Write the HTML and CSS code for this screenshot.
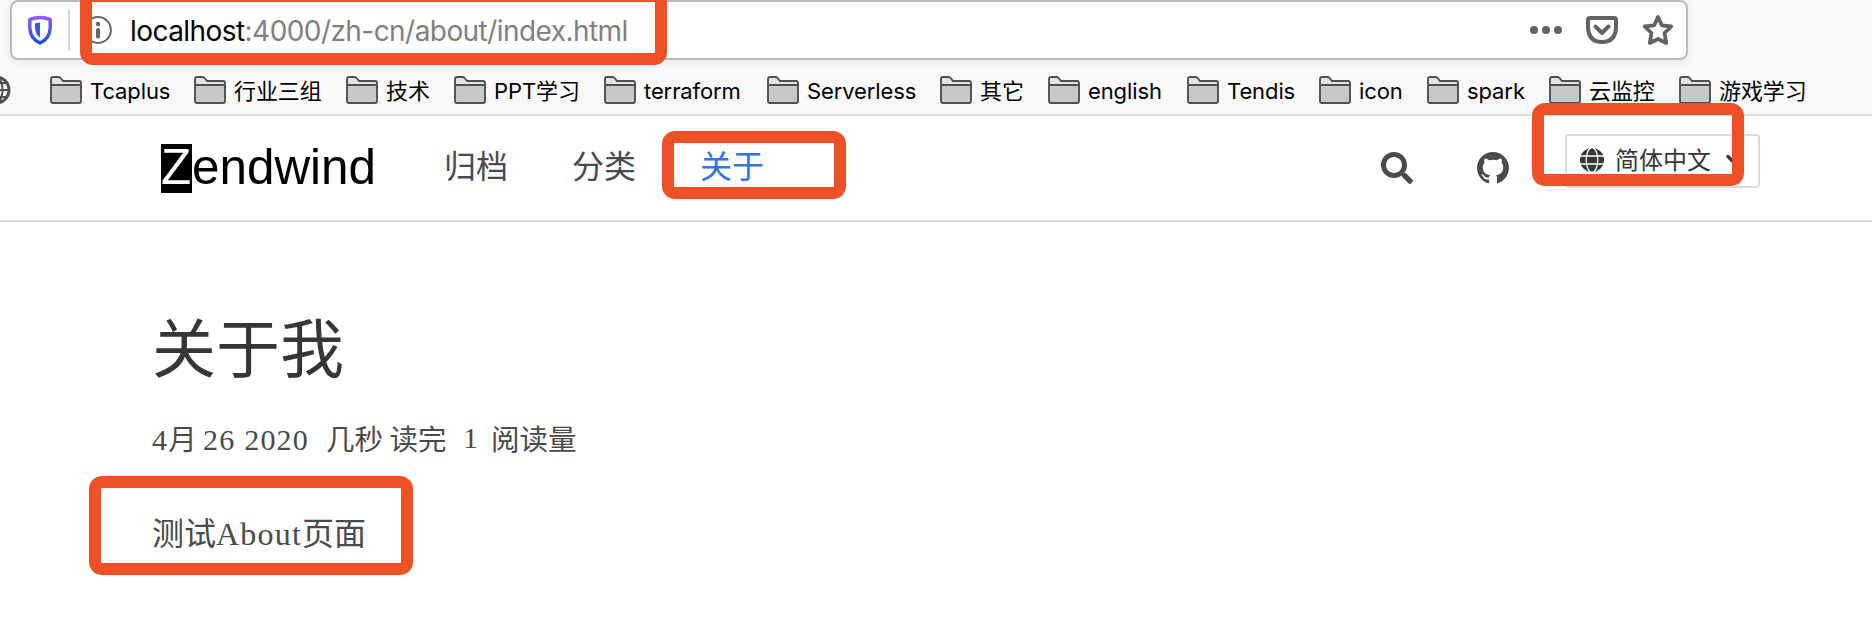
FILE: index.html
```html
<!DOCTYPE html>
<html lang="zh-CN">
<head>
<meta charset="utf-8">
<title>关于我</title>
<link rel="stylesheet" href="styles.css">
</head>
<body>
<svg class="defs" width="0" height="0" aria-hidden="true">
  <symbol id="folder" viewBox="0 0 32 28">
    <path d="M1 9V3Q1 1 3 1H9Q11 1 12 3L14 5H29Q31 5 31 7V9Z" fill="#e3e3e4"/>
    <path d="M1 9H31V25Q31 27 29 27H3Q1 27 1 25Z" fill="#c8c8ca"/>
    <path d="M1 9V3Q1 1 3 1H8.500Q10 1 11 2.500L13 5H29Q31 5 31 7V25Q31 27 29 27H3Q1 27 1 25V9H31" fill="none" stroke="#4f4f4f" stroke-width="1.900"/>
  </symbol>
</svg>
<header class="browser">
  <div class="urlbar">
    <svg class="shield" viewBox="0 0 24 30">
      <defs><linearGradient id="g" x1="0" y1="0" x2="0" y2="1"><stop offset="0" stop-color="#9059ff"/><stop offset="1" stop-color="#1a52d0"/></linearGradient></defs>
      <path d="M12 2.500Q17 2.500 22.200 4.500V13Q21.500 24 12 28Q2.500 24 1.800 13V4.500Q7 2.500 12 2.500Z" fill="none" stroke="url(#g)" stroke-width="3.500" stroke-linejoin="round"/>
      <path d="M12 7.500Q9.500 7.500 7 8.200V13Q7.500 20 12 22.500Z" fill="#3f55dc"/>
    </svg>
    <span class="divider"></span>
    <svg class="info" viewBox="0 0 28 28"><circle cx="14" cy="14" r="12.900" fill="none" stroke="#636363" stroke-width="2"/><circle cx="14" cy="8" r="2.200" fill="#636363"/><path d="M14 14V20.500" stroke="#636363" stroke-width="4" stroke-linecap="round"/></svg>
    <p class="url"><span class="host">localhost</span>:4000/zh-cn/about/index.html</p>
    <div class="actions">
      <svg class="dots" viewBox="0 0 32 32" fill="#636363"><circle cx="4" cy="16" r="4"/><circle cx="16" cy="16" r="4"/><circle cx="28" cy="16" r="4"/></svg>
      <svg viewBox="0 0 32 32" fill="none" stroke="#636363" stroke-width="4" stroke-linejoin="round" stroke-linecap="round"><path d="M4 4H28Q30 4 30 6V14Q29 28 16 28Q3 28 2 14V6Q2 4 4 4Z"/><path d="M9.500 12.500L16 19L22.500 12.500"/></svg>
      <svg viewBox="0 0 32 32" fill="none" stroke="#636363" stroke-width="3.800" stroke-linejoin="round"><path d="M16 3L19.800 11.300L29.300 12.500L22.500 19L24.200 29L16 25L7.800 29L9.500 19L2.700 12.500L12.200 11.300Z"/></svg>
    </div>
  </div>
  <nav class="bookmarks">
    <svg class="bm-globe" viewBox="0 0 30 30" fill="none" stroke="#4f4f4f" stroke-width="3"><circle cx="15" cy="15" r="13"/><ellipse cx="15" cy="15" rx="6.500" ry="13" stroke-width="2"/><path d="M2 15H28M4 8H26M4 22H26M15 2V28" stroke-width="2"/></svg>
    <a class="bm"><svg><use href="#folder"/></svg><span>Tcaplus</span></a>
    <a class="bm cjk"><svg><use href="#folder"/></svg><span>行业三组</span></a>
    <a class="bm cjk"><svg><use href="#folder"/></svg><span>技术</span></a>
    <a class="bm cjk"><svg><use href="#folder"/></svg><span>PPT学习</span></a>
    <a class="bm"><svg><use href="#folder"/></svg><span>terraform</span></a>
    <a class="bm"><svg><use href="#folder"/></svg><span>Serverless</span></a>
    <a class="bm cjk"><svg><use href="#folder"/></svg><span>其它</span></a>
    <a class="bm"><svg><use href="#folder"/></svg><span>english</span></a>
    <a class="bm"><svg><use href="#folder"/></svg><span>Tendis</span></a>
    <a class="bm"><svg><use href="#folder"/></svg><span>icon</span></a>
    <a class="bm"><svg><use href="#folder"/></svg><span>spark</span></a>
    <a class="bm cjk"><svg><use href="#folder"/></svg><span>云监控</span></a>
    <a class="bm cjk"><svg><use href="#folder"/></svg><span>游戏学习</span></a>
  </nav>
</header>
<div class="navbar">
  <a class="logo"><span class="logo-z">Z</span>endwind</a>
  <nav class="menu"><a>归档</a><a>分类</a><a class="active">关于</a></nav>
  <div class="tools">
    <svg viewBox="0 0 512 512" fill="#4a4a4a"><path d="M505 442.700L405.300 343c-4.500-4.500-10.600-7-17-7H372c27.600-35.300 44-79.700 44-128C416 93.100 322.900 0 208 0S0 93.100 0 208s93.100 208 208 208c48.300 0 92.700-16.400 128-44v16.300c0 6.400 2.500 12.500 7 17l99.700 99.700c9.400 9.400 24.600 9.400 33.900 0l28.300-28.300c9.400-9.400 9.400-24.600.1-34zM208 336c-70.700 0-128-57.200-128-128 0-70.700 57.200-128 128-128 70.700 0 128 57.200 128 128 0 70.700-57.200 128-128 128z"/></svg>
    <svg viewBox="0 0 16 16" fill="#4a4a4a"><path d="M8 0C3.580 0 0 3.580 0 8c0 3.540 2.290 6.530 5.470 7.590.4.070.55-.17.55-.38 0-.19-.01-.82-.01-1.490-2.010.37-2.530-.49-2.690-.94-.09-.23-.48-.94-.82-1.130-.28-.15-.68-.52-.01-.53.63-.01 1.080.58 1.230.82.72 1.210 1.870.87 2.330.66.07-.52.28-.87.51-1.070-1.780-.2-3.640-.89-3.640-3.950 0-.87.31-1.590.82-2.150-.08-.2-.36-1.020.08-2.120 0 0 .67-.21 2.200.82.64-.18 1.320-.27 2-.27s1.360.09 2 .27c1.530-1.040 2.200-.82 2.200-.82.44 1.100.16 1.920.08 2.120.51.56.82 1.270.82 2.150 0 3.070-1.870 3.750-3.650 3.950.29.25.54.73.54 1.480 0 1.070-.01 1.930-.01 2.200 0 .21.15.46.55.38A8.010 8.010 0 0 0 16 8c0-4.420-3.580-8-8-8z"/></svg>
    <button class="lang">
      <svg class="globe" viewBox="0 0 24 24"><circle cx="12" cy="12" r="12" fill="#363636"/><g fill="none" stroke="#fff" stroke-width="1.300"><ellipse cx="12" cy="12" rx="5.800" ry="12.500"/><path d="M0 8H24M0 16H24"/></g></svg>
      <span>简体中文</span>
      <svg class="chev" viewBox="0 0 16 12"><path d="M2 2.500L8 8.500L14 2.500" fill="none" stroke="#363636" stroke-width="3.400" stroke-linecap="round"/></svg>
    </button>
  </div>
</div>
<main class="article">
  <h1>关于我</h1>
  <p class="meta"><span class="date"><i>4</i>月 <i>26 2020</i></span><span class="read">几秒 读完</span><i class="count">1</i><span>阅读量</span></p>
  <p class="body">测试<i>About</i>页面</p>
</main>
<div class="mark mark-url"></div>
<div class="mark mark-menu"></div>
<div class="mark mark-lang"></div>
<div class="mark mark-body"></div>
</body>
</html>
```

FILE: styles.css
```css
* { box-sizing: border-box; }
body { margin: 0; height: 628px; overflow: hidden; position: relative; background: #fff; font-family: Inter, "Noto Sans CJK SC", sans-serif; }
svg { display: block; flex: none; }
p, h1 { margin: 0; font-weight: 400; }
i { font-style: normal; }
.defs { position: absolute; }

.browser { height: 116px; background: #f9f9fa; border-bottom: 2px solid #dfdfdf; }
.urlbar { width: 1678px; height: 60px; margin-left: 10px; display: flex; align-items: center; background: #fff; border: 2px solid #bbb; border-radius: 8px; box-shadow: 0 2px 10px rgba(0,0,0,.08); padding: 0 12px 0 16px; }
.shield { width: 24px; height: 30px; }
.divider { width: 2px; height: 42px; margin-left: 16px; background: #d7d7d7; }
.info { width: 28px; height: 28px; margin-left: 14px; }
.url { margin-left: 18px; padding-top: 2px; font-size: 28px; line-height: 40px; letter-spacing: -.56px; color: #808080; white-space: nowrap; }
.host { color: #000; }
.actions { margin-left: auto; display: flex; gap: 24px; }
.actions svg { width: 32px; height: 32px; }

.bookmarks { height: 54px; padding-top: 6px; display: grid; grid-template-columns: 50px 144px 152px 108px 150px 163px 173px 108px 139px 132px 108px 122px 130px auto; align-items: start; align-content: start; }
.bm-globe { width: 30px; height: 30px; margin: 9px 0 0 -19px; }
.bm { display: flex; align-items: center; gap: 8px; height: 48px; font-size: 22px; letter-spacing: -.1px; color: #000; white-space: nowrap; }
.bm svg { width: 32px; height: 28px; }
.bm span { padding-top: 1px; }
.bm.cjk span { padding: 0 0 2px; }

.navbar { height: 106px; display: flex; border-bottom: 2px solid #dbdbdb; padding: 0 112px 0 161px; }
.logo { margin-top: 28px; display: flex; height: 49px; font: 49.400px/45px "Liberation Sans", sans-serif; color: #000; }
.logo-z { width: 31px; height: 49px; background: #000; color: #fff; }
.menu { margin: 27px 0 0 68px; display: flex; gap: 64px; font-size: 32px; line-height: 48px; color: #4a4a4a; }
.menu .active { color: #3273dc; }
.tools { margin-left: auto; display: flex; }
.tools > svg { width: 32px; height: 32px; margin: 36px 64px 0 0; }
.tools > svg + svg { margin-right: 56px; }
.lang { margin-top: 18px; width: 195px; height: 54px; padding: 0 0 3px 13px; display: flex; align-items: center; background: #fff; border: 2px solid #dbdbdb; border-radius: 4px; font: 24px/36px "Noto Sans CJK SC", sans-serif; color: #363636; }
.lang span { padding-bottom: 2px; }
.globe { width: 24px; height: 24px; margin-right: 11px; }
.chev { width: 16px; height: 12px; margin-left: 15px; }

.article { padding: 72px 152px 0; font-family: "Noto Sans CJK SC", sans-serif; color: #4a4a4a; }
.article i { font-family: "Liberation Serif", serif; }
h1 { font-size: 64px; line-height: 100px; color: #363636; }
.meta { margin-top: 23px; display: flex; font-size: 28.500px; line-height: 42px; white-space: pre; }
.meta i { font-size: 30px; letter-spacing: 1.200px; }
.date { width: 174px; }
.read { width: 137px; }
.count { width: 28px; }
.body { margin-top: 45px; font-size: 32px; line-height: 50px; }
.body i { letter-spacing: 1.200px; }

.mark { position: absolute; border: 12px solid #ee5125; border-radius: 13px; }
.mark-url { left: 80px; top: -10px; width: 587px; height: 75px; }
.mark-menu { left: 662px; top: 131px; width: 184px; height: 68px; }
.mark-lang { left: 1532px; top: 103px; width: 212px; height: 83px; }
.mark-body { left: 89px; top: 476px; width: 324px; height: 99px; }
```
